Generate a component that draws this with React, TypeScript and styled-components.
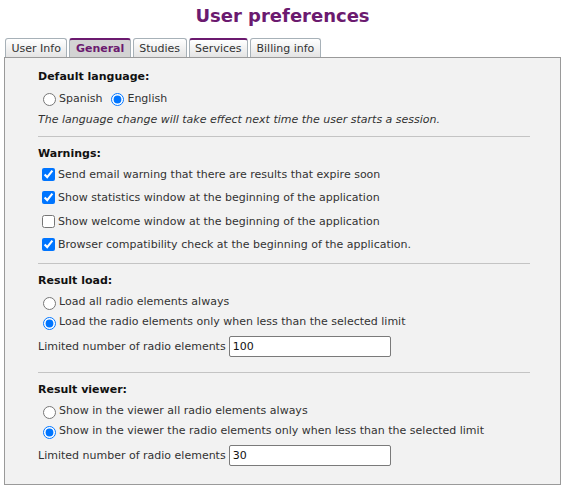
import React from 'react'
import styled, { createGlobalStyle } from 'styled-components'

const GlobalStyle = createGlobalStyle`
  body {
    margin: 0;
    background: #ffffff;
    font-family: "DejaVu Sans", Verdana, sans-serif;
    font-size: 11px;
    color: #222;
  }
`

const Page = styled.div`
  padding: 0 7px 8px 4px;
`

const Title = styled.h1`
  margin: 0;
  padding-top: 5px;
  height: 38px;
  box-sizing: border-box;
  text-align: center;
  font-size: 18px;
  font-weight: bold;
  color: #6b1a6f;
`

const TabBar = styled.div`
  display: flex;
  gap: 2px;
  padding-left: 1px;
  align-items: flex-end;
  height: 19px;
`

const Tab = styled.div<{ $active?: boolean; $hover?: boolean }>`
  height: 19px;
  box-sizing: border-box;
  padding: 0 5.5px;
  display: flex;
  align-items: center;
  border: 1px solid #a7b1b8;
  border-bottom: none;
  border-top: ${(p) => (p.$active || p.$hover ? '2px solid #6b1a6f' : '1px solid #a7b1b8')};
  border-radius: 3px 3px 0 0;
  background: ${(p) => (p.$active ? '#d3d3d3' : 'linear-gradient(#ffffff, #e4e4e4)')};
  color: ${(p) => (p.$active ? '#6b1a6f' : '#333')};
  font-weight: ${(p) => (p.$active ? 'bold' : 'normal')};
  cursor: pointer;
`

const Panel = styled.div`
  display: flex;
  flex-direction: column;
  border: 1px solid #9a9a9a;
  background: #f2f2f2;
  padding: 12px 30px 11px 33px;
`

const Section = styled.section`
  display: flex;
  flex-direction: column;
`

const SectionTitle = styled.div<{ $tight?: boolean }>`
  font-weight: bold;
  color: #111;
  line-height: 14px;
  margin-bottom: ${(p) => (p.$tight ? '3px' : '4px')};
`

const InlineOptions = styled.div`
  display: flex;
  gap: 4px;
`

const OptionRow = styled.label`
  display: flex;
  align-items: center;
  height: 20px;
  color: #333;
  input {
    accent-color: #0075ff;
  }
`

const CheckRow = styled(OptionRow)`
  & + & {
    margin-top: 3.5px;
  }
`

const Note = styled.div`
  font-style: italic;
  color: #333;
  line-height: 14px;
  margin: 5px 0 1px;
`

const Divider = styled.hr`
  width: 100%;
  border: none;
  border-top: 1px solid #c4c4c4;
  margin: 8px 0 10px;
`

const FieldRow = styled.div`
  display: flex;
  align-items: center;
  gap: 3px;
  margin: 4px 0 7px;
  color: #333;
`

const NumberInput = styled.input`
  width: 162px;
  height: 21px;
  box-sizing: border-box;
  border: 1px solid #7a7a7a;
  border-radius: 2px;
  padding: 0 3px;
  font-family: inherit;
  font-size: 11px;
  color: #111;
  background: #fff;
`

const tabs = ['User Info', 'General', 'Studies', 'Services', 'Billing info']

export default function App() {
  return (
    <Page>
      <GlobalStyle />
      <Title>User preferences</Title>
      <TabBar>
        {tabs.map((t) => (
          <Tab key={t} $active={t === 'General'} $hover={t === 'Services'}>
            {t}
          </Tab>
        ))}
      </TabBar>
      <Panel>
        <Section>
          <SectionTitle>Default language:</SectionTitle>
          <InlineOptions>
            <OptionRow>
              <input type="radio" name="lang" />
              Spanish
            </OptionRow>
            <OptionRow>
              <input type="radio" name="lang" defaultChecked />
              English
            </OptionRow>
          </InlineOptions>
          <Note>The language change will take effect next time the user starts a session.</Note>
        </Section>
        <Divider />
        <Section>
          <SectionTitle $tight>Warnings:</SectionTitle>
          <CheckRow>
            <input type="checkbox" defaultChecked />
            Send email warning that there are results that expire soon
          </CheckRow>
          <CheckRow>
            <input type="checkbox" defaultChecked />
            Show statistics window at the beginning of the application
          </CheckRow>
          <CheckRow>
            <input type="checkbox" />
            Show welcome window at the beginning of the application
          </CheckRow>
          <CheckRow>
            <input type="checkbox" defaultChecked />
            Browser compatibility check at the beginning of the application.
          </CheckRow>
        </Section>
        <Divider />
        <Section>
          <SectionTitle>Result load:</SectionTitle>
          <OptionRow>
            <input type="radio" name="load" />
            Load all radio elements always
          </OptionRow>
          <OptionRow>
            <input type="radio" name="load" defaultChecked />
            Load the radio elements only when less than the selected limit
          </OptionRow>
          <FieldRow>
            Limited number of radio elements
            <NumberInput type="text" defaultValue="100" />
          </FieldRow>
        </Section>
        <Divider />
        <Section>
          <SectionTitle>Result viewer:</SectionTitle>
          <OptionRow>
            <input type="radio" name="viewer" />
            Show in the viewer all radio elements always
          </OptionRow>
          <OptionRow>
            <input type="radio" name="viewer" defaultChecked />
            Show in the viewer the radio elements only when less than the selected limit
          </OptionRow>
          <FieldRow>
            Limited number of radio elements
            <NumberInput type="text" defaultValue="30" />
          </FieldRow>
        </Section>
      </Panel>
    </Page>
  )
}
